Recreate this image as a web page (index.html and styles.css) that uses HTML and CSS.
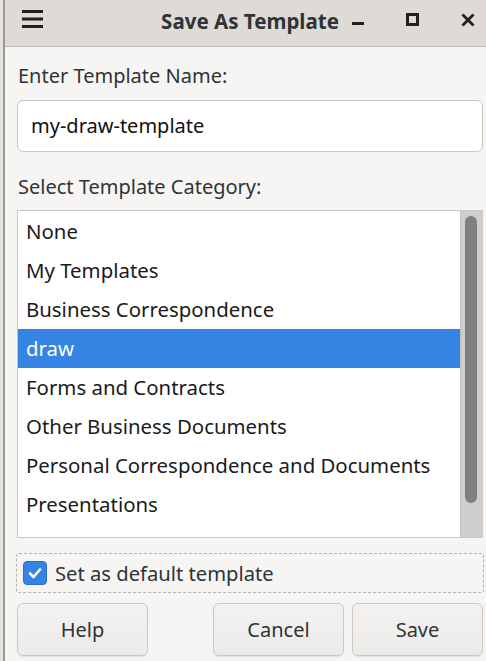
FILE: index.html
```html
<!DOCTYPE html>
<html>
<head>
<meta charset="utf-8">
<link rel="stylesheet" href="styles.css">
</head>
<body>
<div class="edge"></div>
<div class="window">
  <header class="titlebar">
    <div class="menu-btn">
      <svg width="22" height="20" viewBox="0 0 22 20"><rect x="0" y="1" width="21" height="3" fill="#1f1f1f"/><rect x="0" y="8.5" width="21" height="3" fill="#1f1f1f"/><rect x="0" y="16" width="21" height="3" fill="#1f1f1f"/></svg>
    </div>
    <div class="title">Save As Template</div>
    <div class="controls">
      <svg class="ctl" width="14" height="14" viewBox="0 0 14 14"><rect x="1" y="9" width="12" height="3" fill="#1f1f1f"/></svg>
      <svg class="ctl" width="14" height="14" viewBox="0 0 14 14"><rect x="1.5" y="1.5" width="10" height="10" fill="none" stroke="#1f1f1f" stroke-width="3"/></svg>
      <svg class="ctl" width="14" height="14" viewBox="0 0 14 14"><path d="M1.5 1.5 L12.5 12.5 M12.5 1.5 L1.5 12.5" stroke="#1f1f1f" stroke-width="2.8"/></svg>
    </div>
  </header>
  <main class="content">
    <div class="label first">Enter Template Name:</div>
    <div class="entry">my-draw-template</div>
    <div class="label second">Select Template Category:</div>
    <div class="listbox">
      <ul class="items">
        <li>None</li>
        <li>My Templates</li>
        <li>Business Correspondence</li>
        <li class="selected">draw</li>
        <li>Forms and Contracts</li>
        <li>Other Business Documents</li>
        <li>Personal Correspondence and Documents</li>
        <li>Presentations</li>
      </ul>
      <div class="scrollbar"><div class="slider"></div></div>
    </div>
    <div class="checkrow">
      <span class="checkbox">
        <svg width="16" height="16" viewBox="0 0 16 16"><path d="M3 8.5 L6.5 12 L13 4.5" fill="none" stroke="#fff" stroke-width="2.6" stroke-linecap="round" stroke-linejoin="round"/></svg>
      </span>
      <span class="checklabel">Set as default template</span>
    </div>
    <div class="buttons">
      <button class="btn">Help</button>
      <div class="right">
        <button class="btn">Cancel</button>
        <button class="btn">Save</button>
      </div>
    </div>
  </main>
</div>
</body>
</html>
```

FILE: styles.css
```css
html, body {
  margin: 0;
  padding: 0;
  height: 100%;
}
body {
  display: flex;
  width: 486px;
  height: 661px;
  overflow: hidden;
  font-family: "Noto Sans", "DejaVu Sans", sans-serif;
  background: #f6f5f4;
}
.edge {
  width: 3px;
  flex: none;
  background: #e4e2df;
  border-right: 2px solid #9b9996;
}
.window {
  flex: 1;
  display: flex;
  flex-direction: column;
  background: #f6f5f4;
}
.titlebar {
  height: 46px;
  flex: none;
  display: flex;
  align-items: center;
  background: #dedad6;
  border-bottom: 1px solid #bfbab4;
  position: relative;
}
.menu-btn {
  width: 22px;
  height: 20px;
  margin-left: 17px;
  margin-top: -8px;
}
.title {
  flex: 1;
  text-align: center;
  font-weight: bold;
  font-size: 20.5px;
  color: #2e3436;
  margin-top: -5px;
  padding-left: 105px;
}
.controls {
  display: flex;
  align-items: center;
  margin-top: -7px;
}
.ctl {
  margin-right: 41px;
}
.ctl:last-child {
  margin-right: 11px;
}
.content {
  padding: 17px 3px 0 12px;
  display: flex;
  flex-direction: column;
}
.label {
  font-size: 20px;
  line-height: 24px;
  color: #2e3436;
  padding-left: 1px;
}
.entry {
  margin-top: 12px;
  height: 50px;
  border: 1px solid #cdc7c2;
  border-radius: 6px;
  background: #fff;
  box-sizing: content-box;
  font-size: 20px;
  line-height: 50px;
  padding-left: 13px;
  color: #111;
}
.label.second {
  margin-top: 23px;
}
.listbox {
  margin-top: 11px;
  height: 326px;
  border: 1px solid #cdc7c2;
  background: #fff;
  display: flex;
}
.items {
  list-style: none;
  margin: 0;
  padding: 1px 0 0 0;
  flex: 1;
}
.items li {
  height: 39px;
  line-height: 39px;
  padding-left: 8px;
  font-size: 20.4px;
  color: #1b1b1b;
  white-space: nowrap;
}
.items li.selected {
  background: #3584e4;
  color: #fff;
}
.scrollbar {
  width: 22px;
  flex: none;
  background: #cfcecc;
  border-left: 1px solid #c2c0bd;
  box-sizing: border-box;
  padding: 5px 0 0 4px;
}
.slider {
  width: 12px;
  height: 287px;
  border-radius: 6px;
  background: #7e8081;
}
.checkrow {
  margin-top: 15px;
  height: 38px;
  border: 1px dashed #b5b1ad;
  border-radius: 3px;
  display: flex;
  align-items: center;
  padding-left: 6px;
  margin-left: -1px;
  margin-right: -1px;
}
.checkbox {
  width: 24px;
  height: 24px;
  border-radius: 4px;
  background: #3584e4;
  border: 1px solid #2a6fc9;
  box-sizing: border-box;
  display: flex;
  align-items: center;
  justify-content: center;
}
.checklabel {
  margin-left: 8px;
  font-size: 20.2px;
  color: #2e3436;
}
.buttons {
  margin-top: 10px;
  display: flex;
  justify-content: space-between;
}
.right {
  display: flex;
  gap: 8px;
}
.btn {
  width: 131px;
  height: 53px;
  border: 1px solid #cdc7c2;
  border-radius: 6px;
  background: linear-gradient(#f4f2f1, #edebe9);
  box-shadow: 0 1px 1px rgba(0,0,0,0.08);
  font-family: "Noto Sans", "DejaVu Sans", sans-serif;
  font-size: 20px;
  color: #2e3436;
  padding: 0;
}
```
